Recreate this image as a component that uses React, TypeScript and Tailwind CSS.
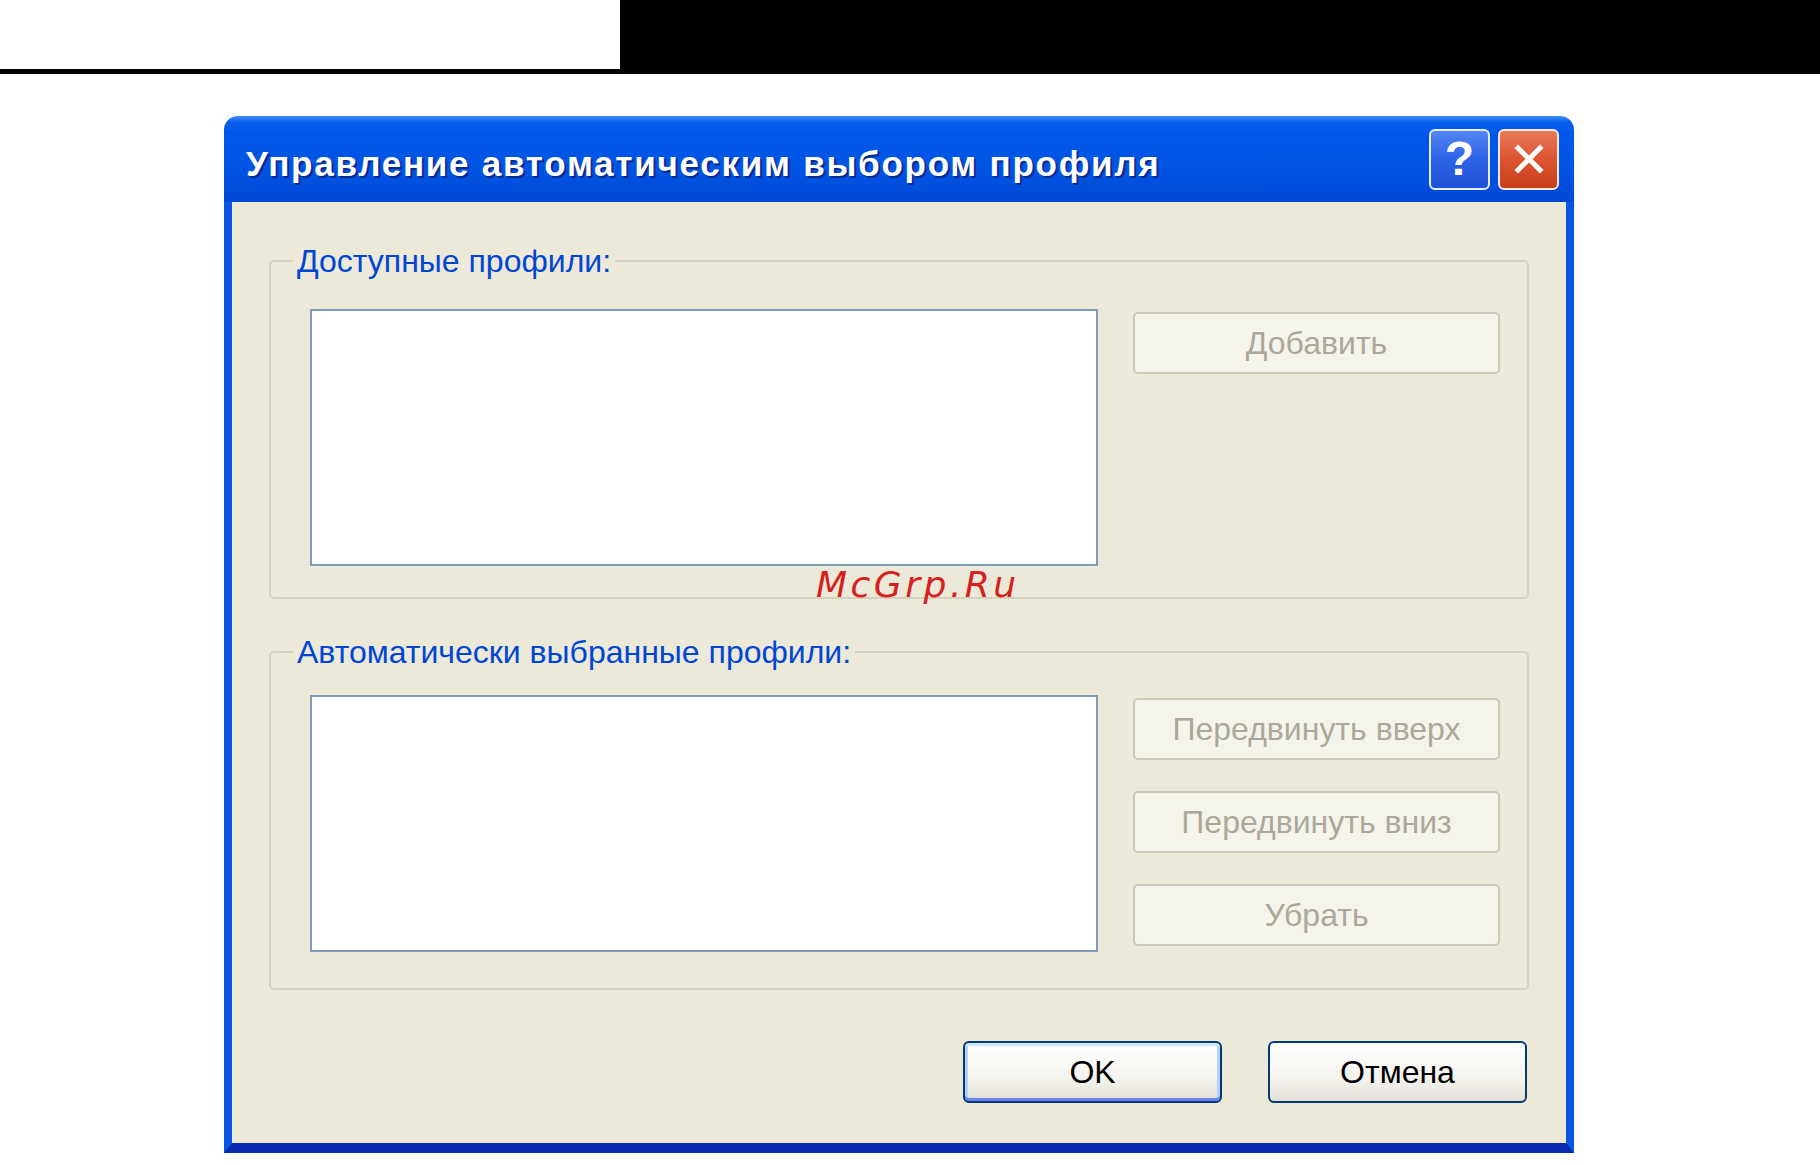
const ui = "font-['Liberation_Sans',Arial,sans-serif]";

function DisabledButton({ label }: { label: string }) {
  return (
    <button
      type="button"
      disabled
      className={`${ui} flex h-[62px] w-[367px] items-center justify-center rounded-[5px] border-2 border-[#cbc8b9] bg-[#f5f4eb] text-[32px] text-[#aca899]`}
    >
      {label}
    </button>
  );
}

function DialogButton({ label, focused }: { label: string; focused?: boolean }) {
  return (
    <button
      type="button"
      className={`${ui} flex h-[62px] w-[259px] items-center justify-center rounded-[6px] border-2 border-[#003c74] bg-[linear-gradient(180deg,#ffffff_0%,#f4f3ee_60%,#e3e1d6_100%)] text-[32px] text-black ${
        focused ? 'shadow-[inset_0_3px_0_#cee7ff,inset_0_-3px_0_#6982ee,inset_3px_0_0_#b9d1fa,inset_-3px_0_0_#b9d1fa]' : ''
      }`}
    >
      {label}
    </button>
  );
}

function GroupBox({
  title,
  children,
  className,
}: {
  title: string;
  children: React.ReactNode;
  className?: string;
}) {
  return (
    <fieldset className={`rounded-[5px] border-2 border-[#d5d2c1] ${className ?? ''}`}>
      <legend className={`${ui} ml-[22px] px-[4px] text-[32px] leading-[30px] text-[#0046d5]`}>{title}</legend>
      {children}
    </fieldset>
  );
}

function ListBox() {
  return <div className="h-[257px] w-[788px] border-2 border-[#7f9db9] bg-white" />;
}

export default function App() {
  return (
    <div className="relative min-h-[1165px] bg-white">
      <div className="h-[74px] bg-black">
        <div className="h-[69px] w-[620px] bg-white" />
      </div>

      <div className="ml-[224px] mt-[42px] w-[1350px]">
        {/* title bar */}
        <div className="flex h-[86px] items-center justify-between rounded-t-[14px] bg-[linear-gradient(180deg,#3d8ef8_0%,#0a60ec_7%,#0058e8_18%,#0054e3_60%,#0049d6_100%)] pl-[22px] pr-[15px]">
          <span className="pt-[10px] font-['Liberation_Sans',Arial,sans-serif] text-[35px] font-bold tracking-[1.75px] text-white [text-shadow:2px_2px_0_#0b2a8c]">
            Управление автоматическим выбором профиля
          </span>
          <div className="flex gap-[8px]">
            <div className="flex h-[61px] w-[61px] items-center justify-center rounded-[6px] border-2 border-[#e8eefc] bg-[linear-gradient(180deg,#5586f3_0%,#2c62e6_50%,#1f52d8_100%)]">
              <span className="font-['Liberation_Sans',Arial,sans-serif] text-[48px] font-bold leading-none text-white">?</span>
            </div>
            <div className="flex h-[61px] w-[61px] items-center justify-center rounded-[6px] border-2 border-[#f5e8e2] bg-[linear-gradient(180deg,#e8795a_0%,#dc5430_50%,#c8401a_100%)]">
              <svg width="34" height="34" viewBox="0 0 34 34">
                <path d="M6 6 L28 28 M28 6 L6 28" stroke="white" strokeWidth="5" strokeLinecap="square" />
              </svg>
            </div>
          </div>
        </div>

        {/* body */}
        <div className="border-x-[8px] border-b-[10px] border-x-[#0a55e2] border-b-[#0a2cb0] bg-[#ece9d8] px-[37px] pb-[40px] pt-[44px]">
          <GroupBox title="Доступные профили:" className="h-[353px]">
            <div className="flex justify-between pl-[39px] pr-[27px] pt-[33px]">
              <ListBox />
              <div className="pt-[3px]">
                <DisabledButton label="Добавить" />
              </div>
            </div>
          </GroupBox>

          <GroupBox title="Автоматически выбранные профили:" className="mt-[38px] h-[353px]">
            <div className="flex justify-between pl-[39px] pr-[27px] pt-[28px]">
              <ListBox />
              <div className="flex flex-col gap-[31px] pt-[3px]">
                <DisabledButton label="Передвинуть вверх" />
                <DisabledButton label="Передвинуть вниз" />
                <DisabledButton label="Убрать" />
              </div>
            </div>
          </GroupBox>

          <div className="mt-[51px] flex justify-end gap-[46px] pr-[2px]">
            <DialogButton label="OK" focused />
            <DialogButton label="Отмена" />
          </div>
        </div>
      </div>

      <div className="absolute left-[816px] top-[558px] font-['DejaVu_Sans',sans-serif] text-[36px] italic tracking-[3.5px] text-[#d52121]">
        McGrp.Ru
      </div>
    </div>
  );
}
